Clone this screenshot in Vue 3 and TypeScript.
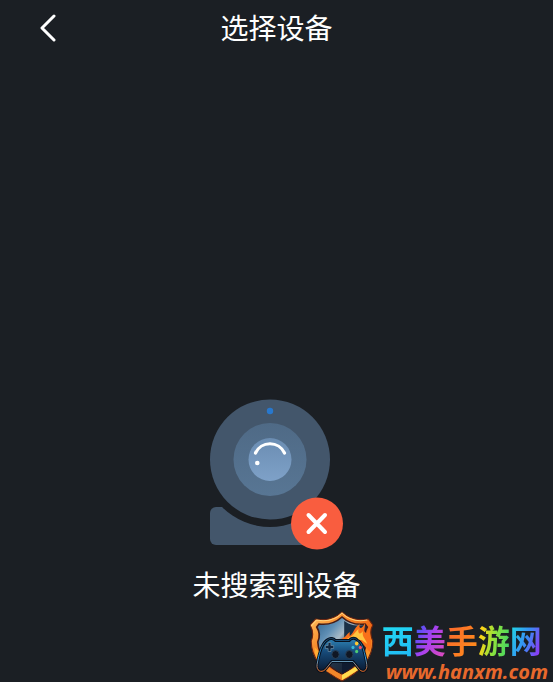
<script setup lang="ts">
const title: string = '选择设备'
const status: string = '未搜索到设备'
const brand: { char: string; tone: string }[] = [
  { char: '西', tone: 'cyan' },
  { char: '美', tone: 'violet' },
  { char: '手', tone: 'orange' },
  { char: '游', tone: 'lime' },
  { char: '网', tone: 'sky' },
]
</script>

<template>
  <div class="page">
    <header class="bar">
      <button class="back" type="button" aria-label="返回">
        <svg width="18" height="28" viewBox="0 0 18 28" aria-hidden="true">
          <path d="M15 2 L3 14 L15 26" fill="none" stroke="#fff" stroke-width="3" stroke-linecap="round" stroke-linejoin="round" />
        </svg>
      </button>
      <h1 class="title">{{ title }}</h1>
    </header>

    <main class="empty">
      <svg class="camera" width="134" height="152" viewBox="210 399 134 152" aria-hidden="true">
        <defs>
          <mask id="stand-cut">
            <rect x="200" y="390" width="160" height="170" fill="#fff" />
            <circle cx="270" cy="459.500" r="67.500" fill="#000" />
          </mask>
          <linearGradient id="lens" x1="0" y1="0" x2="0" y2="1">
            <stop offset="0" stop-color="#6b8db2" />
            <stop offset="1" stop-color="#7ea1c8" />
          </linearGradient>
          <linearGradient id="ring" x1="0" y1="0" x2="0" y2="1">
            <stop offset="0" stop-color="#4f6a86" />
            <stop offset="1" stop-color="#587694" />
          </linearGradient>
        </defs>
        <rect x="210" y="507" width="120" height="38" rx="6" fill="#43566b" mask="url(#stand-cut)" />
        <circle cx="270" cy="459.500" r="60" fill="#43566b" />
        <circle cx="270" cy="459.500" r="36.500" fill="url(#ring)" />
        <circle cx="270" cy="459.500" r="21.500" fill="url(#lens)" />
        <circle cx="270" cy="411" r="3.200" fill="#2878cd" />
        <path d="M255.500 453 A16 16 0 0 1 284.500 453" fill="none" stroke="#fff" stroke-width="3.200" stroke-linecap="round" />
        <circle cx="257.300" cy="463" r="2.300" fill="#fff" />
        <circle cx="317" cy="523.500" r="26" fill="#f95d3f" />
        <path d="M308.500 515 L325 532 M325 515 L308.500 532" stroke="#fff" stroke-width="4" stroke-linecap="round" />
      </svg>
      <p class="status">{{ status }}</p>
    </main>

    <aside class="mark">
      <svg class="crest" width="64" height="71" viewBox="0 0 64 71" aria-hidden="true">
        <defs>
          <linearGradient id="fire" x1="0" y1="0" x2="1" y2="1">
            <stop offset="0" stop-color="#ffc867" />
            <stop offset=".3" stop-color="#f98a2c" />
            <stop offset=".6" stop-color="#f06a16" />
            <stop offset="1" stop-color="#ffd54a" />
          </linearGradient>
          <linearGradient id="steel" x1="0" y1="0" x2="1" y2="1">
            <stop offset="0" stop-color="#2c5f8a" />
            <stop offset=".25" stop-color="#5f8fb5" />
            <stop offset=".4" stop-color="#a9bac6" />
            <stop offset=".55" stop-color="#233347" />
            <stop offset="1" stop-color="#0c1422" />
          </linearGradient>
          <linearGradient id="pad" x1="0" y1="0" x2="0" y2="1">
            <stop offset="0" stop-color="#2f86b8" />
            <stop offset=".4" stop-color="#174b7a" />
            <stop offset="1" stop-color="#091932" />
          </linearGradient>
          <linearGradient id="rim" x1="0" y1="0" x2="0" y2="1">
            <stop offset="0" stop-color="#174a70" />
            <stop offset=".6" stop-color="#36a8f0" />
            <stop offset="1" stop-color="#ff7420" />
          </linearGradient>
        </defs>
        <g transform="translate(-3.200 0) scale(1.100 1)">
          <path d="M32 1 C39 8 47 10 56 8 L60 14 C57 20 58 25 60 30 C60 49 48 61 32 70 C16 61 4 49 4 30 C6 25 6 20 3 14 L8 8 C17 10 25 8 32 1Z" fill="url(#fire)" stroke="#6c2410" stroke-width="1" />
          <path d="M4 15 L9 9 C18 11 26 9 32 2 C38 9 46 11 55 9" fill="none" stroke="#ffd27c" stroke-width="1" />
          <path d="M32 6 C39 13 46 14 53 13 L55 16 C52 21 53 26 54 31 C53 46 45 56 32 63 C19 56 11 46 10 31 C12 26 12 21 9 16 L11 13 C18 14 25 13 32 6Z" fill="url(#steel)" stroke="#431d19" stroke-width="1.500" />
          <path d="M34 10 V28 H53 L51 15 C44 15 39 14 34 10Z" fill="#1b3046" />
          <path d="M32 50 V63 L48 51 L44 48Z" fill="#101b30" />
          <path d="M28 29 C35 28 36 23 39 21 L39 25 C43 22 42 18 48 13 C47 18 50 19 53 12 C53 18 51 20 54 22 L57 19 C56 25 61 30 57 41 L49 30Z" fill="#f9701a" />
          <path d="M34 29 C42 26 43 22 47 18 C46 23 49 24 51 20 C50 26 53 27 55 33 L50 29Z" fill="#ffc43f" />
          <path d="M7 36 C7 44 9 49 12 52 L14 44Z" fill="#ffae35" />
          <path d="M17 55 L32 64 L46 55 L48 58 L32 69 L16 59Z" fill="#f2872a" />
          <path d="M32 64 L46 55 L48 58 L32 69Z" fill="#ffdc4e" />
        </g>
        <g transform="translate(2.500 .500) scale(.920 1)">
          <path d="M17 28 C19 26 23 27 25 29 H40 C42 26 47 26 49 29 C54 30 57 42 59 53 C60 59 55 62 51 58 L44 50 H21 L14 58 C9 62 4 59 5 53 C7 42 10 31 17 28Z" fill="url(#pad)" stroke="#07101e" stroke-width="3" />
          <path d="M17 28 C19 26 23 27 25 29 H40 C42 26 47 26 49 29 C54 30 57 42 59 53 C60 59 55 62 51 58 L44 50 H21 L14 58 C9 62 4 59 5 53 C7 42 10 31 17 28Z" fill="none" stroke="url(#rim)" stroke-width="1" />
          <path d="M17 31 h3 v3 h3 v3 h-3 v3 h-3 v-3 h-3 v-3 h3Z" fill="#10253d" stroke="#7292aa" stroke-width=".700" />
          <circle cx="25" cy="43" r="4" fill="#101724" stroke="#294158" />
          <circle cx="40" cy="43" r="4" fill="#101724" stroke="#294158" />
          <circle cx="48" cy="32" r="1.900" fill="#ffc832" />
          <circle cx="44" cy="36" r="1.700" fill="#34b8d8" />
          <circle cx="52" cy="36" r="1.700" fill="#f34d63" />
          <circle cx="48" cy="40" r="1.700" fill="#4fcc74" />
        </g>
      </svg>
      <div class="words">
        <strong class="brand"><span v-for="item in brand" :key="item.char" :class="item.tone">{{ item.char }}</span></strong>
        <a class="site" href="http://www.hanxm.com">www.hanxm.com</a>
      </div>
    </aside>
  </div>
</template>

<style>
body {
  margin: 0;
  background: #1b1f24;
}
</style>

<style scoped>
.page {
  position: relative;
  box-sizing: border-box;
  display: flex;
  flex-direction: column;
  min-height: 100vh;
  background: #1b1f24;
  color: #fff;
  font-family: "Noto Sans CJK SC", sans-serif;
}

.bar {
  display: grid;
  grid-template-columns: 72px 1fr 72px;
  align-items: center;
  height: 56px;
}

.back {
  display: flex;
  justify-content: flex-end;
  padding: 0 15px 0 0;
  border: 0;
  background: none;
  cursor: pointer;
}

.title,
.status {
  margin: 0;
  padding-bottom: 2px;
  font-size: 28px;
  font-weight: 400;
  line-height: 40px;
  text-align: center;
}

.empty {
  flex: 1;
  display: flex;
  flex-direction: column;
  align-items: center;
  justify-content: flex-end;
  gap: 13px;
  padding-bottom: 76px;
}

.camera {
  display: block;
}

.mark {
  position: absolute;
  right: 5px;
  bottom: 0;
  display: flex;
  align-items: flex-end;
  gap: 8px;
}

.crest {
  display: block;
}

.words {
  display: flex;
  flex-direction: column;
  align-items: flex-start;
}

.brand {
  display: flex;
  font-size: 32px;
  font-weight: 700;
  line-height: 46px;
}

.brand span {
  color: transparent;
  background-clip: text;
}

.brand .cyan {
  background-image: linear-gradient(160deg, #22e2f2, #20b4f5);
}

.brand .violet {
  background-image: linear-gradient(120deg, #4454f8 15%, #a941ed 50%, #e84db4);
}

.brand .orange {
  background-image: linear-gradient(120deg, #fb6230, #ff9318);
}

.brand .lime {
  background-image: linear-gradient(100deg, #ffd316 15%, #8fe33c 50%, #32d26c);
}

.brand .sky {
  background-image: linear-gradient(110deg, #21d8e4 10%, #368ff5 50%, #8a3df5 85%);
}

.site {
  padding-left: 4px;
  color: #e8692c;
  font-family: "Noto Sans", "Open Sans", sans-serif;
  font-size: 20px;
  font-style: italic;
  font-weight: 700;
  line-height: 20px;
  text-decoration: none;
}
</style>
